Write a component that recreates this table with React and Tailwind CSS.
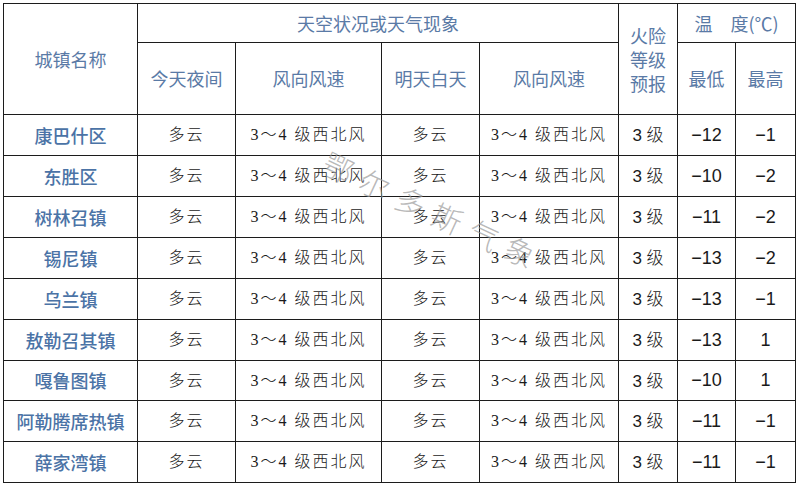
import React from "react";

const rows = [
  ["康巴什区", "−12", "−1"],
  ["东胜区", "−10", "−2"],
  ["树林召镇", "−11", "−2"],
  ["锡尼镇", "−13", "−2"],
  ["乌兰镇", "−13", "−1"],
  ["敖勒召其镇", "−13", "1"],
  ["嘎鲁图镇", "−10", "1"],
  ["阿勒腾席热镇", "−11", "−1"],
  ["薛家湾镇", "−11", "−1"],
];
const heights = ["h-[41px]", "h-[41px]", "h-[41px]", "h-[41px]", "h-[41px]", "h-[41px]", "h-[40px]", "h-[41px]", "h-[41px]"];

const cjk = "font-['Noto_Sans_CJK_SC',sans-serif]";
const cell = "border border-[#1c1c1c] text-center align-middle p-0";
const head = `${cell} ${cjk} text-[18px] text-[#5a7aa6]`;
const body = `${cell} font-['Liberation_Serif','Noto_Sans_CJK_SC',serif] text-[16px] tracking-[2px] text-[#1a1a1a] font-light`;
const num = `${cell} font-['Liberation_Sans',sans-serif] text-[18px] text-[#1a1a1a]`;

export default function App() {
  return (
    <div className="relative w-[799px] h-[484px] bg-white overflow-hidden pt-[3px] pl-[3px]">
      <table className="table-fixed border-collapse w-[792px]">
        <colgroup>
          <col className="w-[134px]" />
          <col className="w-[98px]" />
          <col className="w-[146px]" />
          <col className="w-[98px]" />
          <col className="w-[139px]" />
          <col className="w-[59px]" />
          <col className="w-[58px]" />
          <col className="w-[60px]" />
        </colgroup>
        <thead>
          <tr className="h-[39px]">
            <th rowSpan={2} className={`${head} font-normal`}>城镇名称</th>
            <th colSpan={4} className={`${head} font-normal`}>天空状况或天气现象</th>
            <th rowSpan={2} className={`${head} font-normal leading-[24px]`}>
              火险<br />等级<br />预报
            </th>
            <th colSpan={2} className={`${head} font-normal whitespace-pre`}>温　度(℃)</th>
          </tr>
          <tr className="h-[72px]">
            <th className={`${head} font-normal`}>今天夜间</th>
            <th className={`${head} font-normal`}>风向风速</th>
            <th className={`${head} font-normal`}>明天白天</th>
            <th className={`${head} font-normal`}>风向风速</th>
            <th className={`${head} font-normal`}>最低</th>
            <th className={`${head} font-normal`}>最高</th>
          </tr>
        </thead>
        <tbody>
          {rows.map((r, i) => (
            <tr key={r[0]} className={heights[i]}>
              <td className={`${cell} ${cjk} text-[18px] text-[#4b73a6] font-medium`}>{r[0]}</td>
              <td className={body}>多云</td>
              <td className={`${body} whitespace-pre`}>3～4 级西北风</td>
              <td className={body}>多云</td>
              <td className={`${body} whitespace-pre`}>3～4 级西北风</td>
              <td className={`${cell} text-[#1a1a1a] text-[17px] whitespace-pre`}>
                <span className="font-['Liberation_Sans',sans-serif]">3 </span>
                <span className="font-['Noto_Sans_CJK_SC',sans-serif] font-light">级</span>
              </td>
              <td className={num}>{r[1]}</td>
              <td className={num}>{r[2]}</td>
            </tr>
          ))}
        </tbody>
      </table>
      <div className="pointer-events-none absolute left-[314px] top-[196px] rotate-[25deg] font-['Noto_Sans_CJK_SC',sans-serif] font-light text-[30px] tracking-[10px] text-[#9a9a9a]/70 whitespace-nowrap leading-none">
        鄂尔多斯气象
      </div>
    </div>
  );
}
